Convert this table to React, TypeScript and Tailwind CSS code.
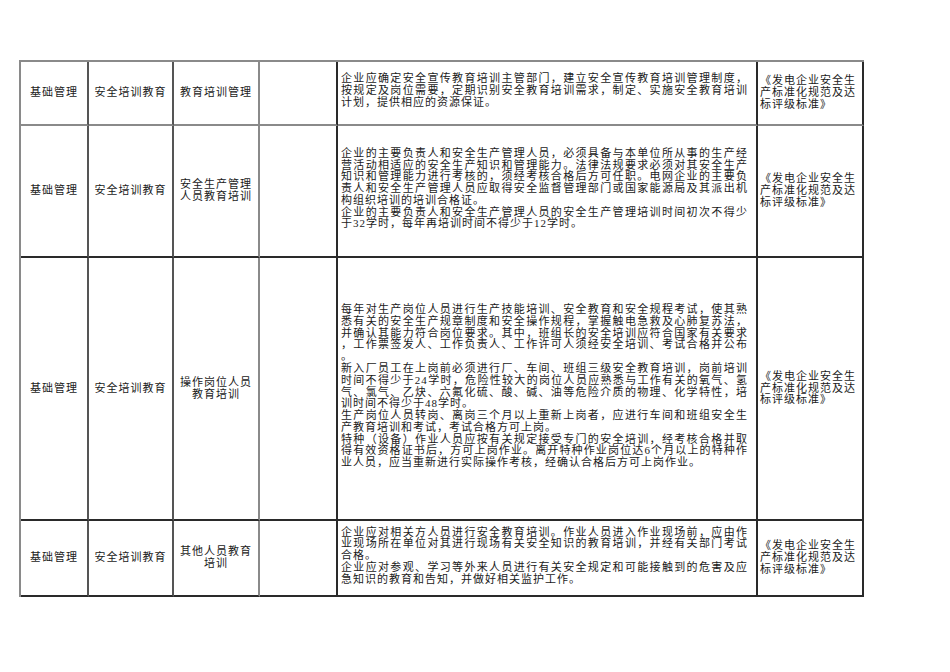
const rows = [
  {
    edge: "border-b-[#8a8a8a]",
    item: ["教育培训管理"],
    text: [
      "企业应确定安全宣传教育培训主管部门，建立安全宣传教育培训管理制度，",
      "按规定及岗位需要，定期识别安全教育培训需求，制定、实施安全教育培训",
      "计划，提供相应的资源保证。",
    ],
  },
  {
    edge: "border-b-[#2a2a2a]",
    item: ["安全生产管理", "人员教育培训"],
    text: [
      "企业的主要负责人和安全生产管理人员，必须具备与本单位所从事的生产经",
      "营活动相适应的安全生产知识和管理能力。法律法规要求必须对其安全生产",
      "知识和管理能力进行考核的，须经考核合格后方可任职。电网企业的主要负",
      "责人和安全生产管理人员应取得安全监督管理部门或国家能源局及其派出机",
      "构组织培训的培训合格证。",
      "企业的主要负责人和安全生产管理人员的安全生产管理培训时间初次不得少",
      "于32学时，每年再培训时间不得少于12学时。",
    ],
  },
  {
    edge: "border-b-[#2a2a2a]",
    item: ["操作岗位人员", "教育培训"],
    text: [
      "每年对生产岗位人员进行生产技能培训、安全教育和安全规程考试，使其熟",
      "悉有关的安全生产规章制度和安全操作规程，掌握触电急救及心肺复苏法，",
      "并确认其能力符合岗位要求。其中，班组长的安全培训应符合国家有关要求",
      "，工作票签发人、工作负责人、工作许可人须经安全培训、考试合格并公布",
      "。",
      "新入厂员工在上岗前必须进行厂、车间、班组三级安全教育培训，岗前培训",
      "时间不得少于24学时，危险性较大的岗位人员应熟悉与工作有关的氧气、氢",
      "气、氯气、乙炔、六氟化硫、酸、碱、油等危险介质的物理、化学特性，培",
      "训时间不得少于48学时。",
      "生产岗位人员转岗、离岗三个月以上重新上岗者，应进行车间和班组安全生",
      "产教育培训和考试，考试合格方可上岗。",
      "特种（设备）作业人员应按有关规定接受专门的安全培训，经考核合格并取",
      "得有效资格证书后，方可上岗作业。离开特种作业岗位达6个月以上的特种作",
      "业人员，应当重新进行实际操作考核，经确认合格后方可上岗作业。",
    ],
  },
  {
    edge: "border-b-[#2a2a2a]",
    item: ["其他人员教育", "培训"],
    text: [
      "企业应对相关方人员进行安全教育培训。作业人员进入作业现场前，应由作",
      "业现场所在单位对其进行现场有关安全知识的教育培训，并经有关部门考试",
      "合格。",
      "企业应对参观、学习等外来人员进行有关安全规定和可能接触到的危害及应",
      "急知识的教育和告知，并做好相关监护工作。",
    ],
  },
];

const cell = "border-r-2 border-b-2 flex items-center";

export default function App() {
  return (
    <div
      className="min-h-screen bg-white pt-[60px] pl-[19px] text-[11px] leading-[11.8px] tracking-[1px] text-[#1a1a1a]"
      style={{ fontFamily: '"Liberation Serif", "Noto Sans CJK SC", serif' }}
    >
      <div className="grid w-[845px] grid-cols-[68px_85px_86px_78px_420px_106px] grid-rows-[64px_132px_263px_76px] border-t-2 border-l-2 border-[#8a8a8a]">
        {rows.map((r, i) => (
          <Row key={i} {...r} />
        ))}
      </div>
    </div>
  );
}

function Row({ edge, item, text }: { edge: string; item: string[]; text: string[] }) {
  return (
    <>
      {/* 类别 */}
      <div className={`${cell} ${edge} justify-center border-r-[#555]`}>基础管理</div>
      <div className={`${cell} ${edge} justify-center border-r-[#555]`}>安全培训教育</div>
      <div className={`${cell} ${edge} flex-col justify-center border-r-[#8a8a8a] text-center`}>
        {item.map((t) => (
          <div key={t}>{t}</div>
        ))}
      </div>
      <div className={`${cell} ${edge} border-r-[#2a2a2a]`} />

      {/* 内容 */}
      <div className={`${cell} ${edge} border-r-[#2a2a2a] pb-[4px] pl-[3px] pr-[8px]`}>
        <div className="w-full">
          {text.map((t, j) => (
            <div key={j} className={t.length >= 32 ? "text-justify [text-align-last:justify]" : ""}>
              {t}
            </div>
          ))}
        </div>
      </div>

      {/* 依据 */}
      <div className={`${cell} ${edge} border-r-[#2a2a2a] pl-[2px]`}>
        <div>
          <div>《发电企业安全生</div>
          <div>产标准化规范及达</div>
          <div>标评级标准》</div>
        </div>
      </div>
    </>
  );
}
